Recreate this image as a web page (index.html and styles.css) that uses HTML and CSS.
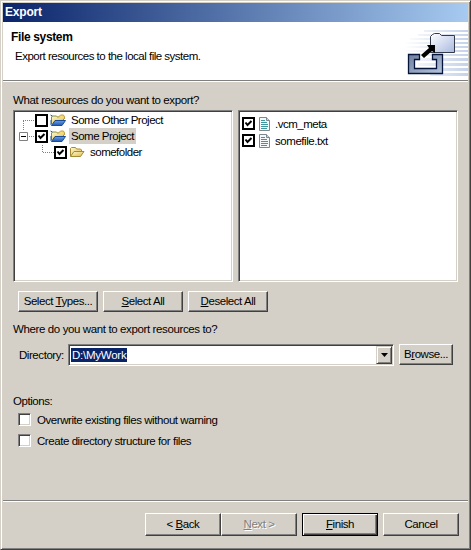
FILE: index.html
```html
<!DOCTYPE html>
<html lang="en">
<head>
<meta charset="utf-8">
<title>Export</title>
<link rel="stylesheet" href="styles.css">
</head>
<body>
<svg width="0" height="0" class="defs" aria-hidden="true">
  <defs>
    <linearGradient id="yellow" x1="0" y1="0" x2="1" y2="1"><stop offset="0" stop-color="#fffbd0"/><stop offset="1" stop-color="#dfb848"/></linearGradient>
    <linearGradient id="blue" x1="0" y1="0" x2="0" y2="1"><stop offset="0" stop-color="#6da0dc"/><stop offset="1" stop-color="#1c58b6"/></linearGradient>
    <linearGradient id="steel" x1="0" y1="0" x2="1" y2="1"><stop offset="0" stop-color="#6d7e9c"/><stop offset="1" stop-color="#b7c6df"/></linearGradient>
    <linearGradient id="pale" x1="0" y1="0" x2="1" y2="1"><stop offset="0" stop-color="#fff"/><stop offset="1" stop-color="#a9b9df"/></linearGradient>
    <linearGradient id="fade"><stop offset="0" stop-color="#fff"/><stop offset="1" stop-color="#c5d2ea"/></linearGradient>
    <symbol id="project" viewBox="0 0 16 13">
      <path d="M1.500 10V3l1-1h4l1 1h6v4" fill="url(#yellow)" stroke="#8c8a3c"/>
      <path d="M8 3.500l2.500-2.500h3l1 2v2" fill="#f3dc78" stroke="#bd9d3e"/>
      <path d="M1.500 11.500L5 6.500H15.500L12 11.500Z" fill="url(#blue)" stroke="#174a97"/>
      <path d="M.5 1l2 1M1 6v5" stroke="#245b94"/>
    </symbol>
    <symbol id="folder" viewBox="0 0 16 12">
      <path d="M1.500 10V2.500l1-1h4l1 1.500h4l1 1v2" fill="url(#yellow)" stroke="#a58a35"/>
      <path d="M1.500 10.500L5 5.500H15L11.500 10.500Z" fill="url(#yellow)" stroke="#a58a35"/>
    </symbol>
    <symbol id="file" viewBox="0 0 11 14">
      <path d="M.5.5H7.500L10.500 3.500V13.500H.5Z" fill="#f4f8fa" stroke="#7d8790"/>
      <path d="M7.500 .5V3.500H10.500" fill="#ccd3d8" stroke="#7d8790"/>
      <path d="M2 3.500H6M2 5.500H8M2 7.500H9M2 9.500H9M2 11.500H8" stroke="#3f969e"/>
    </symbol>
    <symbol id="check" viewBox="0 0 13 13">
      <path d="M1 1H12V12H1Z" fill="#fff" stroke="#000" stroke-width="2"/>
      <path d="M3.500 5.500L5.500 8L9.500 4" fill="none" stroke="#000" stroke-width="2"/>
    </symbol>
    <symbol id="uncheck" viewBox="0 0 13 13"><path d="M1 1H12V12H1Z" fill="#fff" stroke="#000" stroke-width="2"/></symbol>
  </defs>
</svg>
<main class="window">
  <div class="title"><span>Export</span></div>
  <header class="header">
    <div class="heading"><h1>File system</h1><p class="tight">Export resources to the local file system.</p></div>
    <svg class="banner" width="68" height="58" viewBox="4 0 68 58">
      <path fill="url(#fade)" d="M28 8h44v2H28zM22 12h50v2H22zM14 16h58v2H14zM10 20h62v2H10zM8 24h64v2H8zM8 28h64v2H8zM8 32h64v2H8zM14 36h58v3H14zM22 41h50v3H22zM28 46h44v3H28zM34 51h38v3H34z"/>
      <path d="M34.500 30.500V14.500L36.500 12.500L38.500 11.500H43.500L45.500 13.500H58.500V30.500Z" fill="url(#pale)" stroke="#343b4b"/>
      <path d="M12.500 32.500H23.500V37.500H18.500V46.500H40.500V37.500H36.500V32.500H46.500V51.500H12.500Z" fill="url(#steel)" stroke="#05143a" stroke-width="1.300"/>
      <path d="M31 23H39V31L36 29L28 36L25 33L33 26Z" fill="#000"/>
    </svg>
  </header>
  <section class="body">
    <div class="label loose">What resources do you want to export?</div>
    <div class="panes">
      <div class="pane tree">
        <svg class="lines" width="40" height="44" viewBox="0 0 40 44"><path d="M8.500 8V18M8 7.500H20M14 23.500H20M27.500 32V39.500H39" fill="none" stroke="#808080" stroke-dasharray="1 1"/><path d="M4.500 19.500H12.500V27.500H4.500Z" fill="#fff" stroke="#808080"/><path d="M6 23.500H11" stroke="#000"/></svg>
        <div class="row"><svg width="13" height="13"><use href="#uncheck"/></svg><svg width="16" height="13"><use href="#project"/></svg><span class="name tight">Some Other Project</span></div>
        <div class="row"><svg width="13" height="13"><use href="#check"/></svg><svg width="16" height="13"><use href="#project"/></svg><span class="name selected tight">Some Project</span></div>
        <div class="row child"><svg width="13" height="13"><use href="#check"/></svg><svg width="16" height="12"><use href="#folder"/></svg><span class="name tight">somefolder</span></div>
      </div>
      <div class="pane files">
        <div class="file"><svg width="13" height="13"><use href="#check"/></svg><svg class="doc" width="11" height="14"><use href="#file"/></svg><span class="tight">.vcm_meta</span></div>
        <div class="file"><svg width="13" height="13"><use href="#check"/></svg><svg class="doc" width="11" height="14"><use href="#file"/></svg><span>somefile.txt</span></div>
      </div>
    </div>
    <div class="selects"><button>Select <u>T</u>ypes...</button><button><u>S</u>elect All</button><button><u>D</u>eselect All</button></div>
    <div class="label where loose">Where do you want to export resources to?</div>
    <div class="directory">
      <label>Directory:</label>
      <div class="combo"><span class="value">D:\MyWork</span><span class="arrow"><svg width="7" height="4"><path d="M0 0H7L3.500 4Z"/></svg></span></div>
      <button class="browse">B<u>r</u>owse...</button>
    </div>
    <div class="label options">Options:</div>
    <div class="option"><i class="box"></i><span>Overwrite existing files without warning</span></div>
    <div class="option"><i class="box"></i><span>Create directory structure for files</span></div>
  </section>
  <footer>
    <button>&lt; <u>B</u>ack</button><button class="disabled"><u>N</u>ext &gt;</button><button class="default"><u>F</u>inish</button><button class="cancel">Cancel</button>
  </footer>
</main>
</body>
</html>
```
FILE: styles.css
```css
* { box-sizing: border-box; }
body { margin: 0; background: #d4d0c8; color: #000; font: 11.5px/16px "Liberation Sans", Arial, sans-serif; letter-spacing: -.44px; white-space: nowrap; }
.tight { letter-spacing: -.5px; }
.loose { letter-spacing: -.38px; }
.defs { position: absolute; }
svg, .box { display: block; flex: none; }
.window { width: 471px; height: 550px; display: flex; flex-direction: column; border: 1px solid; border-color: #d4d0c8 #404040 #404040 #d4d0c8; box-shadow: inset 1px 1px #fff, inset -1px -1px #808080; padding: 2px; overflow: hidden; }
.title { height: 19px; width: 465px; padding: 0 2px; font-weight: bold; font-size: 12px; letter-spacing: -.2px; line-height: 18px; color: #fff; background: linear-gradient(90deg, #0a246a, #a6caf0); }
.header { height: 59px; display: flex; justify-content: space-between; background: #fff; border-bottom: 1px solid #808080; box-shadow: 0 1px #fff; }
.heading { padding: 6px 0 0 8px; }
h1 { margin: 0; font-size: 12px; line-height: 18px; letter-spacing: -.35px; }
p { margin: 2px 0 0 4px; }
.banner { align-self: flex-start; }
.body { height: 419px; padding: 11px 7px 0 10px; }
.label { height: 16px; }
.panes { display: flex; gap: 5px; margin-top: 2px; }
.pane { position: relative; width: 220px; height: 172px; background: #fff; border: 1px solid; border-color: #808080 #fff #fff #808080; box-shadow: inset 1px 1px #404040, inset -1px -1px #d4d0c8; }
.tree { padding: 1px; }
.lines { position: absolute; left: 1px; top: 2px; }
.row { display: flex; align-items: center; height: 16px; padding-left: 20px; }
.row.child { padding-left: 39px; }
.row svg + svg { margin: 0 3px 0 2px; }
.name { padding: 0 2px; line-height: 16px; }
.selected { background: #d4d0c8; width: 67px; }
.files { padding: 4px 0 0 3px; }
.file { display: flex; align-items: center; height: 17px; }
.doc { margin: 0 5px 0 4px; }
button { width: 80px; height: 21px; margin: 0; padding: 0; color: #000; font: inherit; letter-spacing: inherit; line-height: 17px; background: #d4d0c8; border: 1px solid; border-color: #fff #404040 #404040 #fff; border-radius: 0; box-shadow: inset -1px -1px #808080; }
.selects { display: flex; gap: 5px; padding-left: 5px; margin-top: 9px; }
.where { margin-top: 9px; }
.directory { display: flex; padding-left: 6px; margin-top: 7px; }
.directory label { width: 49px; line-height: 22px; }
.combo { width: 326px; height: 22px; display: flex; justify-content: space-between; padding: 1px; background: #fff; border: 1px solid; border-color: #808080 #fff #fff #808080; box-shadow: inset 1px 1px #404040, inset -1px -1px #d4d0c8; }
.value { margin: 2px 0 0 1px; padding: 0 1px; height: 14px; line-height: 14px; letter-spacing: -.25px; background: #0a246a; color: #fff; }
.arrow { width: 16px; height: 18px; display: grid; place-items: center; background: #d4d0c8; border: 1px solid; border-color: #d4d0c8 #404040 #404040 #d4d0c8; box-shadow: inset 1px 1px #fff, inset -1px -1px #808080; }
.browse { width: 54px; margin-left: 5px; }
.options { margin-top: 27px; }
.option { display: flex; align-items: center; gap: 6px; height: 21px; padding-left: 5px; }
.box { width: 13px; height: 13px; background: #fff; border: 1px solid; border-color: #808080 #fff #fff #808080; box-shadow: inset 1px 1px #404040, inset -1px -1px #d4d0c8; }
footer { flex: 1; display: flex; justify-content: flex-end; padding: 12px 9px 0 0; border-top: 1px solid #808080; box-shadow: inset 0 1px #fff; }
footer button { width: 76px; height: 23px; }
.disabled { color: #808080; text-shadow: 1px 1px #fff; }
.default { margin: 0 5px; border-color: #000; box-shadow: inset 1px 1px #fff, inset -1px -1px #404040, inset -2px -2px #808080; }
```
